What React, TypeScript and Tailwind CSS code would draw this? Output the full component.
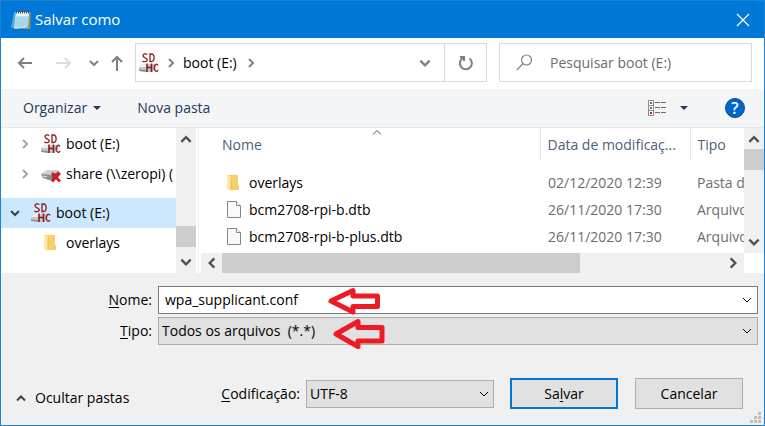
import type { ReactNode } from "react";

type ChevronProps = { dir: "up" | "down" | "left" | "right"; className?: string; size?: number; weight?: number };

const chevronPaths = {
  up: "M2 8.5 6 4.5 10 8.5",
  down: "M2 4 6 8 10 4",
  left: "M8 2 4 6 8 10",
  right: "M4 2 8 6 4 10",
};

function Chevron({ dir, className = "", size = 12, weight = 2 }: ChevronProps) {
  return (
    <svg viewBox="0 0 12 12" width={size} height={size} className={`shrink-0 ${className}`} fill="none" stroke="currentColor" strokeWidth={weight} aria-hidden="true">
      <path d={chevronPaths[dir]} />
    </svg>
  );
}

function NotepadIcon() {
  return (
    <svg width="20" height="20" viewBox="0 0 20 20" className="shrink-0" aria-hidden="true">
      <path d="M3 2h3L5 18H0z" fill="#4fa9da" />
      <path d="M5 2h14v17H3z" fill="#8ccbe0" />
      <path d="M5 2h13v12l-5 4H3z" fill="#b9e3ee" />
      <path d="M5 2h13v4H5z" fill="#e2f3f7" />
      <path d="M5 8h12M5 10h12M4 12h13M4 14h12M4 16h9" stroke="#93cfe0" strokeWidth="1" />
      <path d="M18 2h1.500v17H8v-1h9z" fill="#9b8f66" />
      <path d="M5.500.5v3M7.500.5v3M9.500.5v3M11.500.5v3M13.500.5v3M15.500.5v3M17.500.5v3" stroke="#4a4f50" strokeWidth="1" />
    </svg>
  );
}

function SdCardIcon() {
  return (
    <svg width="20" height="20" viewBox="0 0 20 20" className="shrink-0" fill="none" aria-hidden="true">
      <path d="M0 14l4-3h13v5l-4 3H3l-3-2z" fill="#c4c8cc" />
      <path d="M0 14l4-3h6l-3 3z" fill="#eceef0" />
      <path d="M0 17l7 1" stroke="#8a8f94" strokeWidth="1.500" />
      <path d="M8.300 1.500C7 .5 4 .5 4 2.800s4.300 1.700 4.300 4S4.500 9 3.500 8M11 1v7.500h1.500c3.500 0 3.500-7.500 0-7.500z" stroke="#8c1d1d" strokeWidth="1.300" />
      <path d="M8 10.500V19M12.500 10.500V19M8 14.500h4.500" stroke="#8c1d1d" strokeWidth="1.600" />
      <path d="M19 12.500c-1-2-3.800-1.500-3.800 2.300s2.800 4.300 3.800 2.200" stroke="#9c2a2a" strokeWidth="1.500" />
    </svg>
  );
}

function OfflineDriveIcon() {
  return (
    <svg width="20" height="20" viewBox="0 0 20 20" className="shrink-0" fill="none" aria-hidden="true">
      <path d="M0 10l6-4h11l1 4-8 2z" fill="#d0d0d0" />
      <path d="M0 10l11 1v6L2 14z" fill="#8b8b8b" />
      <path d="M11 11l7-4v5l-7 5z" fill="#5f5f5f" />
      <path d="M2 12l4 1" stroke="#f2f2f2" strokeWidth="1" />
      <path d="M11 9l8 8.500M19 9l-8 8.500" stroke="#dc1420" strokeWidth="2.600" />
    </svg>
  );
}

function FolderIcon() {
  return (
    <svg width="14" height="18" viewBox="0 0 14 18" className="shrink-0" aria-hidden="true">
      <path d="M2 1h10v10h1v5H2z" fill="#f6cf6b" />
      <path d="M1 1l4 2v14l-4-2z" fill="#ffe9a6" />
      <path d="M5 4v12" stroke="#e8bb50" strokeWidth="1" />
    </svg>
  );
}

function FileIcon() {
  return (
    <svg width="16" height="20" viewBox="0 0 16 20" className="shrink-0" aria-hidden="true">
      <path d="M1.500 1.500h9l4 4v12h-13z" fill="#f9f9f9" stroke="#858585" />
      <path d="M10.500 1.500v4h4" fill="#fff" stroke="#858585" />
    </svg>
  );
}

function RedArrow({ className, path }: { className: string; path: string }) {
  return (
    <svg viewBox="0 0 54 32" width="54" height="32" className={`pointer-events-none absolute ${className}`} fill="none" stroke="#ed1c24" strokeWidth="5" strokeLinejoin="round" aria-hidden="true">
      <path d={path} />
    </svg>
  );
}

type TreeRowProps = { label: string; icon: ReactNode; className: string; chevron?: ReactNode };

function TreeRow({ label, icon, className, chevron }: TreeRowProps) {
  return (
    <li className={`flex h-[30px] items-center whitespace-nowrap ${className}`}>
      {chevron}
      {icon}
      <span className="ml-[5px]">{label}</span>
    </li>
  );
}

const files = [
  { name: "overlays", date: "02/12/2020 12:39", type: "Pasta d", folder: true },
  { name: "bcm2708-rpi-b.dtb", date: "26/11/2020 17:30", type: "Arquivo", folder: false },
  { name: "bcm2708-rpi-b-plus.dtb", date: "26/11/2020 17:30", type: "Arquivo", folder: false },
];

export default function App() {
  return (
    <main className="flex min-h-screen w-full flex-col border border-[#1883d7] bg-[#f0f0f0] font-['Open_Sans','Noto_Sans',sans-serif] text-sm text-black">
      <header className="flex h-[37px] items-center bg-[#0078d7] pr-3 pl-2.5 text-white">
        <NotepadIcon />
        <h1 className="ml-1 text-[15px]">Salvar como</h1>
        <button type="button" aria-label="Fechar" className="ml-auto p-0.5">
          <svg width="14" height="14" viewBox="0 0 14 14" stroke="currentColor" strokeWidth="1.200" aria-hidden="true"><path d="M1 1l12 12M13 1L1 13" /></svg>
        </button>
      </header>

      <nav className="flex h-[51px] items-center bg-white pr-3 pb-0.5 pl-4 text-[#808080]">
        <button type="button" aria-label="Voltar">
          <svg width="16" height="14" viewBox="0 0 16 14" fill="none" stroke="currentColor" strokeWidth="2" aria-hidden="true"><path d="M15 7H2M7 2L2 7l5 5" /></svg>
        </button>
        <button type="button" aria-label="Avançar" className="ml-[22px] text-[#dcdcdc]">
          <svg width="17" height="14" viewBox="0 0 17 14" fill="none" stroke="currentColor" strokeWidth="2" aria-hidden="true"><path d="M1 7h14M10 2l5 5-5 5" /></svg>
        </button>
        <button type="button" aria-label="Locais recentes" className="ml-4"><Chevron dir="down" /></button>
        <button type="button" aria-label="Acima" className="ml-[11px]">
          <svg width="12" height="16" viewBox="0 0 12 16" fill="none" stroke="currentColor" strokeWidth="2" aria-hidden="true"><path d="M6 16V2M1 7l5-5 5 5" /></svg>
        </button>
        <div className="ml-3 flex h-[39px] min-w-0 flex-1 items-center border border-[#d9d9d9] pl-[3px]">
          <SdCardIcon />
          <Chevron dir="right" className="ml-1.5" />
          <button type="button" className="ml-1.5 whitespace-nowrap text-black">boot (E:)</button>
          <Chevron dir="right" className="ml-2" />
          <button type="button" aria-label="Locais anteriores" className="mr-3 ml-auto"><Chevron dir="down" size={14} /></button>
          <button type="button" aria-label="Atualizar" className="flex h-full w-[42px] items-center justify-center border-l border-[#d9d9d9]">
            <svg width="16" height="16" viewBox="0 0 16 16" fill="none" stroke="currentColor" strokeWidth="2" aria-hidden="true">
              <path d="M11.500 3.500a6 6 0 1 1-6.500-.5" />
              <path d="M2 2h4v4" />
            </svg>
          </button>
        </div>
        <div className="ml-3 flex h-[39px] w-[253px] min-w-0 items-center border border-[#d9d9d9] pl-4">
          <svg width="17" height="17" viewBox="0 0 17 17" fill="none" stroke="currentColor" strokeWidth="1.200" className="shrink-0" aria-hidden="true">
            <circle cx="10.500" cy="6" r="5" /><path d="M7 9.500L1 16" />
          </svg>
          <input type="search" aria-label="Pesquisar boot (E:)" placeholder="Pesquisar boot (E:)" className="ml-[17px] min-w-0 flex-1 bg-transparent outline-none placeholder:text-[#6d6d6d]" />
        </div>
      </nav>

      <div className="flex h-[39px] items-center border-b border-[#e5e7ea] bg-[#f4f5f7] pr-[19px] pl-[22px] text-[#1e395b]">
        <button type="button" className="flex items-center gap-1.5">
          Organizar
          <svg width="8" height="4" viewBox="0 0 8 4" fill="currentColor" aria-hidden="true"><path d="M0 0h8L4 4z" /></svg>
        </button>
        <button type="button" className="ml-9">Nova pasta</button>
        <button type="button" aria-label="Alterar modo de exibição" className="ml-auto flex items-center gap-3.5">
          <svg width="18" height="16" viewBox="0 0 18 16" fill="none" stroke="#8c8c8c" aria-hidden="true">
            <path d="M.5.5h5v15h-5zM.5 5.500h5M.5 10.500h5" fill="#fff" />
            <path d="M7 2.500h5M13 2.500h5M7 7.500h5M13 7.500h5M7 12.500h5M13 12.500h5" stroke="#6b6b6b" />
            <path d="M2 2h2v2H2z" fill="#3a78b5" stroke="none" />
            <path d="M2 7h2v2H2z" fill="#8c6a42" stroke="none" />
            <path d="M2 12h2v2H2z" fill="#d02020" stroke="none" />
          </svg>
          <svg width="8" height="4" viewBox="0 0 8 4" fill="currentColor" aria-hidden="true"><path d="M0 0h8L4 4z" /></svg>
        </button>
        <button type="button" aria-label="Ajuda" className="ml-[37px] flex size-5 items-center justify-center rounded-full border border-[#0a4a8c] bg-[#0066cc] text-base font-semibold text-white">?</button>
      </div>

      <section className="flex h-[145px] bg-white">
        <aside className="flex w-[195px] shrink-0">
          <ul className="min-w-0 flex-1 overflow-hidden pt-px">
            <TreeRow label="boot (E:)" icon={<SdCardIcon />} className="pl-[18px]" chevron={<Chevron dir="right" className="mr-2.5 text-[#a6a6a6]" />} />
            <TreeRow label={"share (\\\\zeropi) ("} icon={<OfflineDriveIcon />} className="pl-[18px]" chevron={<Chevron dir="right" className="mr-2.5 text-[#a6a6a6]" />} />
            <TreeRow label="boot (E:)" icon={<SdCardIcon />} className="mt-[9px] bg-[#cce8ff] pl-2" chevron={<Chevron dir="down" className="mr-2.5 text-[#404040]" />} />
            <TreeRow label="overlays" icon={<span className="mr-1 flex"><FolderIcon /></span>} className="pl-[42px]" />
          </ul>
          <div className="flex w-5 shrink-0 flex-col items-center bg-[#f0f0f0] py-1 text-[#505050]">
            <Chevron dir="up" size={14} />
            <div className="mt-auto mb-2 h-[21px] w-full bg-[#cdcdcd]" />
            <Chevron dir="down" size={14} />
          </div>
        </aside>
        <div className="mr-0.5 ml-0.5 w-px bg-[#f0f0f0]" />

        <div className="flex min-w-0 flex-1 flex-col">
          <div className="flex h-[125px]">
            <div className="relative min-w-0 flex-1 overflow-hidden">
              <Chevron dir="up" size={12} weight={1} className="absolute -top-0.5 left-[170px] text-[#505050]" />
              <table className="w-full table-fixed text-left whitespace-nowrap text-[#6d6d6d]">
                <colgroup>
                  <col />
                  <col className="w-[150px]" />
                  <col className="w-[54px]" />
                </colgroup>
                <thead>
                  <tr className="h-8 text-[#4c607a]">
                    <th scope="col" className="pt-0.5 pl-[21px] font-normal">Nome</th>
                    <th scope="col" className="border-l border-[#e5e5e5] pt-0.5 pl-[7px] font-normal">Data de modificaç...</th>
                    <th scope="col" className="border-l border-[#e5e5e5] pt-0.5 pl-[7px] font-normal">Tipo</th>
                  </tr>
                </thead>
                <tbody className="before:block before:h-[9px]">
                  {files.map((file) => (
                    <tr key={file.name} className="h-[27px]">
                      <td className="text-black">
                        <div className="flex items-center pl-[25px]">
                          <span className="flex w-[23px]">{file.folder ? <FolderIcon /> : <FileIcon />}</span>
                          {file.name}
                        </div>
                      </td>
                      <td className="pl-2">{file.date}</td>
                      <td className="overflow-hidden pl-[7px]">{file.type}</td>
                    </tr>
                  ))}
                </tbody>
              </table>
            </div>
            <div className="flex w-5 shrink-0 flex-col items-center bg-[#f0f0f0] py-1 text-[#505050]">
              <Chevron dir="up" size={14} />
              <div className="mt-[3px] h-[21px] w-full bg-[#cdcdcd]" />
              <Chevron dir="down" size={14} className="mt-auto" />
            </div>
          </div>
          <div className="mr-5 flex h-5 items-center bg-[#f0f0f0] px-1 text-[#505050]">
            <Chevron dir="left" size={14} />
            <div className="ml-[3px] h-full w-[67%] bg-[#cdcdcd]" />
            <Chevron dir="right" size={14} className="ml-auto" />
          </div>
        </div>
      </section>

      <form className="flex flex-1 flex-col" onSubmit={(event) => event.preventDefault()}>
        <div className="relative mt-[13px] mr-1.5 grid grid-cols-[157px_1fr] items-center gap-y-[3px]">
          <label htmlFor="name" className="pr-1.5 text-right"><span className="underline underline-offset-2">N</span>ome:</label>
          <div className="flex h-7 items-center border border-[#7a7a7a] bg-white pr-1 pl-1.5">
            <input id="name" defaultValue="wpa_supplicant.conf" className="min-w-0 flex-1 bg-transparent outline-none" />
            <button type="button" aria-label="Nomes anteriores"><Chevron dir="down" size={12} weight={1} /></button>
          </div>
          <label htmlFor="type" className="pr-1.5 text-right"><span className="underline underline-offset-2">T</span>ipo:</label>
          <div className="relative flex">
            <select id="type" className="h-7 w-full appearance-none border border-[#adadad] bg-[#e1e1e1] pr-6 pl-[3px]">
              <option>{"Todos os arquivos\u00a0 (*.*)"}</option>
            </select>
            <Chevron dir="down" size={12} weight={1} className="pointer-events-none absolute top-2 right-[5px]" />
          </div>
          <RedArrow className="top-0 left-[326px]" path="M4 15 26 4.500v5.500h24.500v10.500H26V26z" />
          <RedArrow className="top-8 left-[330px]" path="M5 16 27 3.500v6h24v13.500H27v5.500z" />
        </div>

        <div className="mt-8 flex h-[33px] items-center pr-[21px] pl-3.5">
          <button type="button" className="mt-2 flex items-center gap-2">
            <Chevron dir="up" size={12} className="text-[#404040]" />
            Ocultar pastas
          </button>
          <label htmlFor="encoding" className="ml-auto"><span className="underline underline-offset-2">C</span>odificação:</label>
          <div className="relative ml-1.5 flex">
            <select id="encoding" className="h-7 w-[188px] appearance-none border border-[#adadad] bg-[#e1e1e1] pr-6 pl-[3px]">
              <option>UTF-8</option>
            </select>
            <Chevron dir="down" size={12} weight={1} className="pointer-events-none absolute top-2 right-1" />
          </div>
          <button type="submit" className="ml-4 h-[31px] w-[108px] border-2 border-[#0078d7] bg-[#e1e1e1]">Sa<span className="underline underline-offset-2">l</span>var</button>
          <button type="button" className="ml-[17px] h-[31px] w-[108px] border border-[#adadad] bg-[#e1e1e1]">Cancelar</button>
        </div>
        <svg width="11" height="11" viewBox="0 0 11 11" fill="#bfbfbf" className="mt-auto mr-[3px] mb-0.5 ml-auto" aria-hidden="true">
          <path d="M8 0h3v3H8zM4 4h3v3H4zM8 4h3v3H8zM0 8h3v3H0zM4 8h3v3H4zM8 8h3v3H8z" />
        </svg>
      </form>
    </main>
  );
}
